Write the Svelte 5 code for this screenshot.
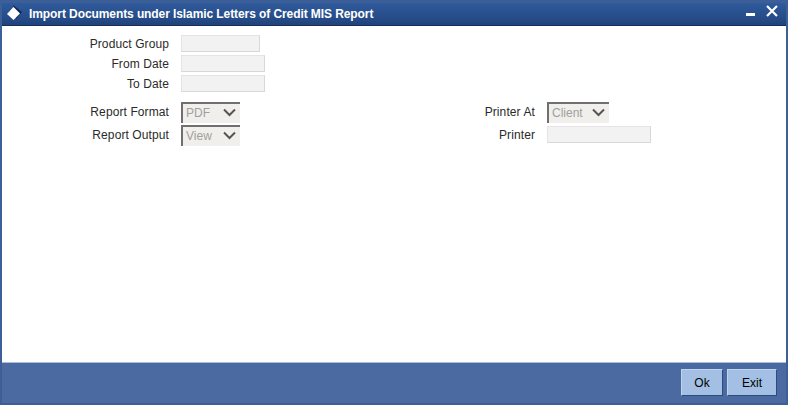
<script>
  const top = [
    { label: 'Product Group', cls: 'w79' },
    { label: 'From Date', cls: 'w84' },
    { label: 'To Date', cls: 'w84' }
  ];
</script>

<div class="window">
  <header class="titlebar">
    <svg class="logo" width="22" height="20" viewBox="0 0 22 20">
      <path d="M8 1 L17 8 L11 15 Z" fill="#0f2a52" />
      <path d="M8.5 3 L15 9.5 L8.5 16 L2 10 Z" fill="#fff" />
    </svg>
    <h1>Import Documents under Islamic Letters of Credit MIS Report</h1>
    <div class="controls">
      <span class="min"></span>
      <svg class="close" width="12" height="12" viewBox="0 0 12 12">
        <path d="M1 1 L11 11 M11 1 L1 11" stroke="#fff" stroke-width="2.2" fill="none" />
      </svg>
    </div>
  </header>

  <main class="content">
    <section class="group">
      {#each top as f}
        <div class="row">
          <span class="label">{f.label}</span>
          <span class="input {f.cls}"></span>
        </div>
      {/each}
    </section>
    <section class="columns">
      <div class="col">
        <div class="srow">
          <span class="label">Report Format</span>
          <span class="select w59"><span>PDF</span><svg width="13" height="9" viewBox="0 0 13 9"><path d="M1 1.5 L6.5 7 L12 1.5" stroke="#555" stroke-width="2" fill="none" /></svg></span>
        </div>
        <div class="srow">
          <span class="label">Report Output</span>
          <span class="select w59"><span>View</span><svg width="13" height="9" viewBox="0 0 13 9"><path d="M1 1.5 L6.5 7 L12 1.5" stroke="#555" stroke-width="2" fill="none" /></svg></span>
        </div>
      </div>
      <div class="col right">
        <div class="srow">
          <span class="label">Printer At</span>
          <span class="select w62"><span>Client</span><svg width="13" height="9" viewBox="0 0 13 9"><path d="M1 1.5 L6.5 7 L12 1.5" stroke="#555" stroke-width="2" fill="none" /></svg></span>
        </div>
        <div class="srow">
          <span class="label">Printer</span>
          <span class="input w104 lifted"></span>
        </div>
      </div>
    </section>
  </main>

  <footer class="footer">
    <button>Ok</button>
    <button>Exit</button>
  </footer>
</div>

<style>
  :global(body) { margin: 0; }
  .window {
    width: 788px;
    height: 405px;
    box-sizing: border-box;
    display: flex;
    flex-direction: column;
    background: #3c5f98;
    padding: 3px 2px 2px;
    font-family: "Liberation Sans", Arial, sans-serif;
  }
  .titlebar {
    height: 23px;
    flex: none;
    display: flex;
    align-items: center;
    box-sizing: border-box;
    padding-left: 3px;
    background: linear-gradient(#2f5a9c, #264c88 70%, #20427a);
    border-bottom: 1px solid #14305c;
    color: #fff;
  }
  .logo { flex: none; margin-right: 2px; }
  h1 {
    margin: 0;
    font-size: 12px;
    font-weight: bold;
    letter-spacing: -0.086px;
    color: #fff;
    flex: 1;
  }
  .controls {
    display: flex;
    align-items: flex-start;
    gap: 11px;
    padding-right: 8px;
    align-self: flex-start;
  }
  .min {
    width: 9px;
    height: 3px;
    background: #fff;
    margin-top: 10px;
  }
  .close { margin-top: 2px; }
  .content {
    flex: 1;
    background: #fff;
    box-sizing: border-box;
    padding-top: 9px;
    border-bottom: 1px solid #a9bcdc;
    font-size: 12px;
    color: #2a2a2a;
  }
  .row {
    display: flex;
    align-items: center;
    height: 17px;
    margin-bottom: 3px;
  }
  .label {
    width: 167px;
    flex: none;
    text-align: right;
    margin-right: 12px;
    color: #2a2a2a;
    letter-spacing: 0.1px;
  }
  .srow .label { padding-bottom: 2px; }
  .input {
    display: block;
    height: 17px;
    box-sizing: border-box;
    background: #f2f2f2;
    border: 1px solid #e4e4e4;
    border-right-color: #d8d8d8;
    border-bottom-color: #d8d8d8;
  }
  .lifted { margin-bottom: 2px; }
  .w79 { width: 79px; }
  .w84 { width: 84px; }
  .w104 { width: 104px; }
  .columns {
    display: flex;
    margin-top: 10px;
  }
  .col { width: 366px; }
  .srow {
    display: flex;
    align-items: center;
    height: 21px;
    margin-bottom: 2px;
  }
  .select {
    height: 21px;
    box-sizing: border-box;
    display: flex;
    align-items: center;
    justify-content: space-between;
    padding: 0 4px 2px 3px;
    background: #f0efeb;
    border-left: 2px solid #707070;
    border-top: 2px solid #707070;
    color: #a0a0a0;
    font-size: 12px;
  }
  .w59 { width: 59px; }
  .w62 { width: 62px; }
  .footer {
    height: 40px;
    flex: none;
    display: flex;
    justify-content: flex-end;
    align-items: flex-start;
    gap: 4px;
    padding: 6px 9px 0 0;
    box-sizing: border-box;
    background: #4a6aa1;
  }
  button {
    width: 42px;
    height: 27px;
    padding: 0;
    box-sizing: border-box;
    background: #a3c0e4;
    border: 1px solid;
    border-color: #c0d4ee #2f4a7c #2f4a7c #c0d4ee;
    font-family: "Liberation Sans", Arial, sans-serif;
    font-size: 12px;
    font-weight: normal;
    color: #000;
  }
  button:last-child { width: 50px; }
</style>
